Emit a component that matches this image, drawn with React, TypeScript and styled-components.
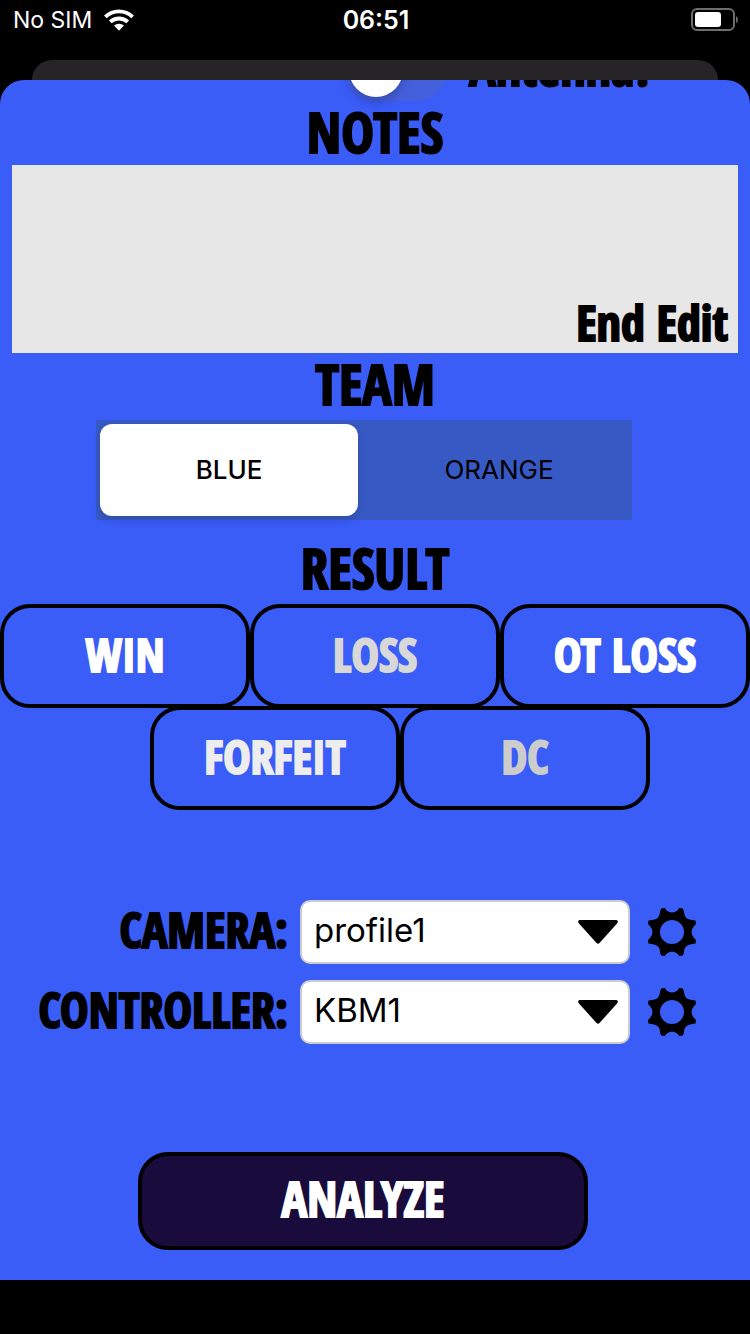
import React, { useState } from "react";
import styled, { createGlobalStyle } from "styled-components";

const GlobalStyle = createGlobalStyle`
  *, *::before, *::after { box-sizing: border-box; }
  body { margin: 0; background: #000; }
  button, select, textarea, input { font: inherit; margin: 0; }
`;

const display = `"Open Sans Condensed", "Roboto Condensed", "Liberation Sans", sans-serif`;
const system = `Inter, "Liberation Sans", sans-serif`;

const Page = styled.div`
  display: flex;
  flex-direction: column;
  min-height: 100vh;
  padding-bottom: 54px;
  color: #000;
  font-family: ${display};
  font-weight: 700;
  -webkit-text-stroke: 2px currentColor;
`;

const StatusBar = styled.header`
  display: grid;
  grid-template-columns: 1fr auto 1fr;
  align-items: center;
  height: 40px;
  margin-bottom: 20px;
  padding: 0 11px 0 13px;
  color: #fff;
  font: 400 23px/40px ${system};
  -webkit-text-stroke: 0;
`;

const Carrier = styled.div`
  display: flex;
  align-items: center;
  gap: 12px;
`;

const Clock = styled.time`
  font-size: 25px;
  font-weight: 600;
`;

const BatteryIcon = styled.svg`
  justify-self: end;
`;

const BackCard = styled.div`
  height: 20px;
  margin: 0 32px;
  border-radius: 20px 20px 0 0;
  background: #262427;
`;

const Sheet = styled.main`
  flex: 1;
  overflow: hidden;
  padding-bottom: 30px;
  border-radius: 24px 24px 0 0;
  background: #3a5cf7;
`;

const SwitchRow = styled.label`
  display: flex;
  align-items: center;
  gap: 22px;
  height: 62px;
  margin: -41px 0 0 46%;
  font-size: 50px;
  line-height: 52px;
`;

const Switch = styled.input`
  appearance: none;
  display: flex;
  flex: none;
  align-items: center;
  width: 102px;
  height: 62px;
  padding: 4px;
  border-radius: 31px;
  background: #4560dd;

  &::before {
    content: "";
    width: 54px;
    height: 54px;
    border-radius: 50%;
    background: #fff;
    box-shadow: 0 4px 12px rgba(0, 0, 0, 0.25);
  }

  &:checked {
    justify-content: flex-end;
  }
`;

const SwitchText = styled.span`
  padding-bottom: 6px;
`;

const Heading = styled.h2`
  margin: 0;
  padding-bottom: 2px;
  font-size: 55px;
  font-weight: 700;
  line-height: 62px;
  text-align: center;
`;

const NotesBox = styled.div`
  position: relative;
  height: 188px;
  margin: 0 12px;
`;

const NotesInput = styled.textarea`
  display: block;
  width: 100%;
  height: 100%;
  padding: 12px;
  border: 0;
  border-radius: 0;
  outline: 0;
  resize: none;
  background: #e7e7e7;
  font: 400 28px/36px ${system};
  -webkit-text-stroke: 0;
`;

const EndEdit = styled.button`
  position: absolute;
  right: 10px;
  bottom: 5px;
  padding: 0;
  border: 0;
  background: none;
  font-size: 48px;
  line-height: 50px;
`;

const Segments = styled.div`
  display: grid;
  grid-template-columns: 1fr 1fr;
  gap: 12px;
  height: 100px;
  margin: 3px 118px 17px 96px;
  padding: 4px;
  background: #3759c4;
  font: 500 26px/92px ${system};
  -webkit-text-stroke: 0;
`;

const Segment = styled.label`
  border-radius: 12px;
  text-align: center;
  font-weight: 400;

  &:has(input:checked) {
    background: #fff;
    font-weight: 500;
    box-shadow: 0 4px 10px rgba(0, 0, 0, 0.14);
  }

  input {
    position: absolute;
    opacity: 0;
  }
`;

const ResultRow = styled.div<{ $second?: boolean }>`
  display: flex;
  margin: ${(p) => (p.$second ? "-2px 0 0 20%" : "3px 0 0")};
  width: ${(p) => (p.$second ? "66.6667%" : "100%")};
`;

const OutlineButton = styled.button<{ $tone: string }>`
  flex: 1;
  height: 104px;
  padding: 0 0 4px;
  border: 4px solid #000;
  border-radius: 30px;
  background: none;
  color: ${(p) => p.$tone};
  font-size: 46px;
  line-height: 92px;
`;

const Profiles = styled.div`
  display: grid;
  gap: 16px;
  margin-top: 90px;
`;

const ProfileRow = styled.div`
  display: grid;
  grid-template-columns: minmax(0, 4fr) minmax(0, 5fr) 48px;
  align-items: center;
  margin-right: 54px;
`;

const ProfileLabel = styled.label`
  padding-bottom: 4px;
  font-size: 48px;
  line-height: 60px;
  text-align: right;
  white-space: nowrap;
`;

const SelectBox = styled.div`
  position: relative;
  margin: 0 18px 0 12px;

  svg {
    position: absolute;
    top: 20px;
    right: 12px;
    pointer-events: none;
  }
`;

const Select = styled.select`
  appearance: none;
  display: block;
  width: 100%;
  height: 64px;
  padding: 0 60px 4px 12px;
  border: 2px solid #ccc;
  border-radius: 10px;
  background: #fff;
  color: #000;
  font: 400 33px/56px ${system};
  -webkit-text-stroke: 0;
`;

const GearButton = styled.button`
  display: grid;
  place-items: center;
  height: 64px;
  padding: 0;
  border: 0;
  background: none;
`;

const Analyze = styled.button`
  display: block;
  width: 60%;
  height: 98px;
  margin: 108px 0 0 138px;
  padding: 0 0 4px;
  border: 4px solid #000;
  border-radius: 30px;
  background: #190b3b;
  color: #fff;
  font-size: 48px;
  line-height: 86px;
`;

const Gear = () => (
  <svg width="48" height="48" viewBox="-24 -24 48 48" aria-hidden="true">
    <path
      fillRule="evenodd"
      d="M-6 -22 Q0 -17 6 -22 L7 -24 L11 -23.500 L12 -20 Q12 -13 20 -12 L23.500 -11.500 L24 -8 L22 -6 Q17 0 22 6 L24 8 L23.500 11.500 L20 12 Q12 13 12 20 L11 23.500 L7 24 L6 22 Q0 17 -6 22 L-7 24 L-11 23.500 L-12 20 Q-12 13 -20 12 L-23.500 11.500 L-24 8 L-22 6 Q-17 0 -22 -6 L-24 -8 L-23.500 -11.500 L-20 -12 Q-12 -13 -12 -20 L-11 -23.500 L-7 -24 Z M0 -12 A12 12 0 1 0 0 12 A12 12 0 1 0 0 -12 Z"
    />
  </svg>
);

const Wifi = () => (
  <svg width="30" height="22" viewBox="0 0 30 22" fill="#fff" aria-hidden="true">
    <path d="M0 6.600 A21.500 21.500 0 0 1 30 6.600 L27.300 9.300 A17.700 17.700 0 0 0 2.700 9.300 Z" />
    <path d="M4.900 11.500 A14.600 14.600 0 0 1 25.100 11.500 L22.300 14.300 A10.600 10.600 0 0 0 7.700 14.300 Z" />
    <path d="M10 16.600 A7.600 7.600 0 0 1 20 16.600 L15 21.800 Z" />
  </svg>
);

interface ProfilePickerProps {
  id: string;
  label: string;
  options: string[];
}

const ProfilePicker = ({ id, label, options }: ProfilePickerProps) => (
  <ProfileRow>
    <ProfileLabel htmlFor={id}>{label}</ProfileLabel>
    <SelectBox>
      <Select id={id}>
        {options.map((option) => (
          <option key={option}>{option}</option>
        ))}
      </Select>
      <svg width="40" height="24" viewBox="0 0 40 24" aria-hidden="true">
        <path d="M1.500 0 H38.500 Q41 1 39 3.500 L21.500 23 Q20 24.500 18.500 23 L1 3.500 Q-1 1 1.500 0 Z" />
      </svg>
    </SelectBox>
    <GearButton type="button" aria-label={`${label} settings`}>
      <Gear />
    </GearButton>
  </ProfileRow>
);

export default function App() {
  const [team, setTeam] = useState("BLUE");

  return (
    <>
      <GlobalStyle />
      <Page>
        <StatusBar>
          <Carrier>
            No SIM
            <Wifi />
          </Carrier>
          <Clock>06:51</Clock>
          <BatteryIcon width="48" height="24" viewBox="0 0 48 24" aria-hidden="true">
            <rect x="1" y="1" width="42" height="21" rx="5" fill="none" stroke="#6e6e6e" strokeWidth="2" />
            <rect x="4" y="4" width="26" height="15" rx="3" fill="#fff" />
            <path d="M45 8 Q47 9 47 11.500 Q47 14 45 15 Z" fill="#6e6e6e" />
          </BatteryIcon>
        </StatusBar>
        <BackCard />
        <Sheet>
          <SwitchRow>
            <Switch type="checkbox" role="switch" />
            <SwitchText>Antenna?</SwitchText>
          </SwitchRow>

          <Heading id="notes-title">NOTES</Heading>
          <NotesBox>
            <NotesInput aria-labelledby="notes-title" />
            <EndEdit type="button">End Edit</EndEdit>
          </NotesBox>

          <Heading id="team-title">TEAM</Heading>
          <Segments role="radiogroup" aria-labelledby="team-title">
            {["BLUE", "ORANGE"].map((name) => (
              <Segment key={name}>
                <input type="radio" name="team" checked={team === name} onChange={() => setTeam(name)} />
                {name}
              </Segment>
            ))}
          </Segments>

          <Heading>RESULT</Heading>
          <ResultRow>
            <OutlineButton type="button" $tone="#fff">WIN</OutlineButton>
            <OutlineButton type="button" $tone="#d8d8d8">LOSS</OutlineButton>
            <OutlineButton type="button" $tone="#fff">OT LOSS</OutlineButton>
          </ResultRow>
          <ResultRow $second>
            <OutlineButton type="button" $tone="#ededed">FORFEIT</OutlineButton>
            <OutlineButton type="button" $tone="#ccc">DC</OutlineButton>
          </ResultRow>

          <Profiles>
            <ProfilePicker id="camera" label="CAMERA:" options={["profile1"]} />
            <ProfilePicker id="controller" label="CONTROLLER:" options={["KBM1"]} />
          </Profiles>

          <Analyze type="button">ANALYZE</Analyze>
        </Sheet>
      </Page>
    </>
  );
}
